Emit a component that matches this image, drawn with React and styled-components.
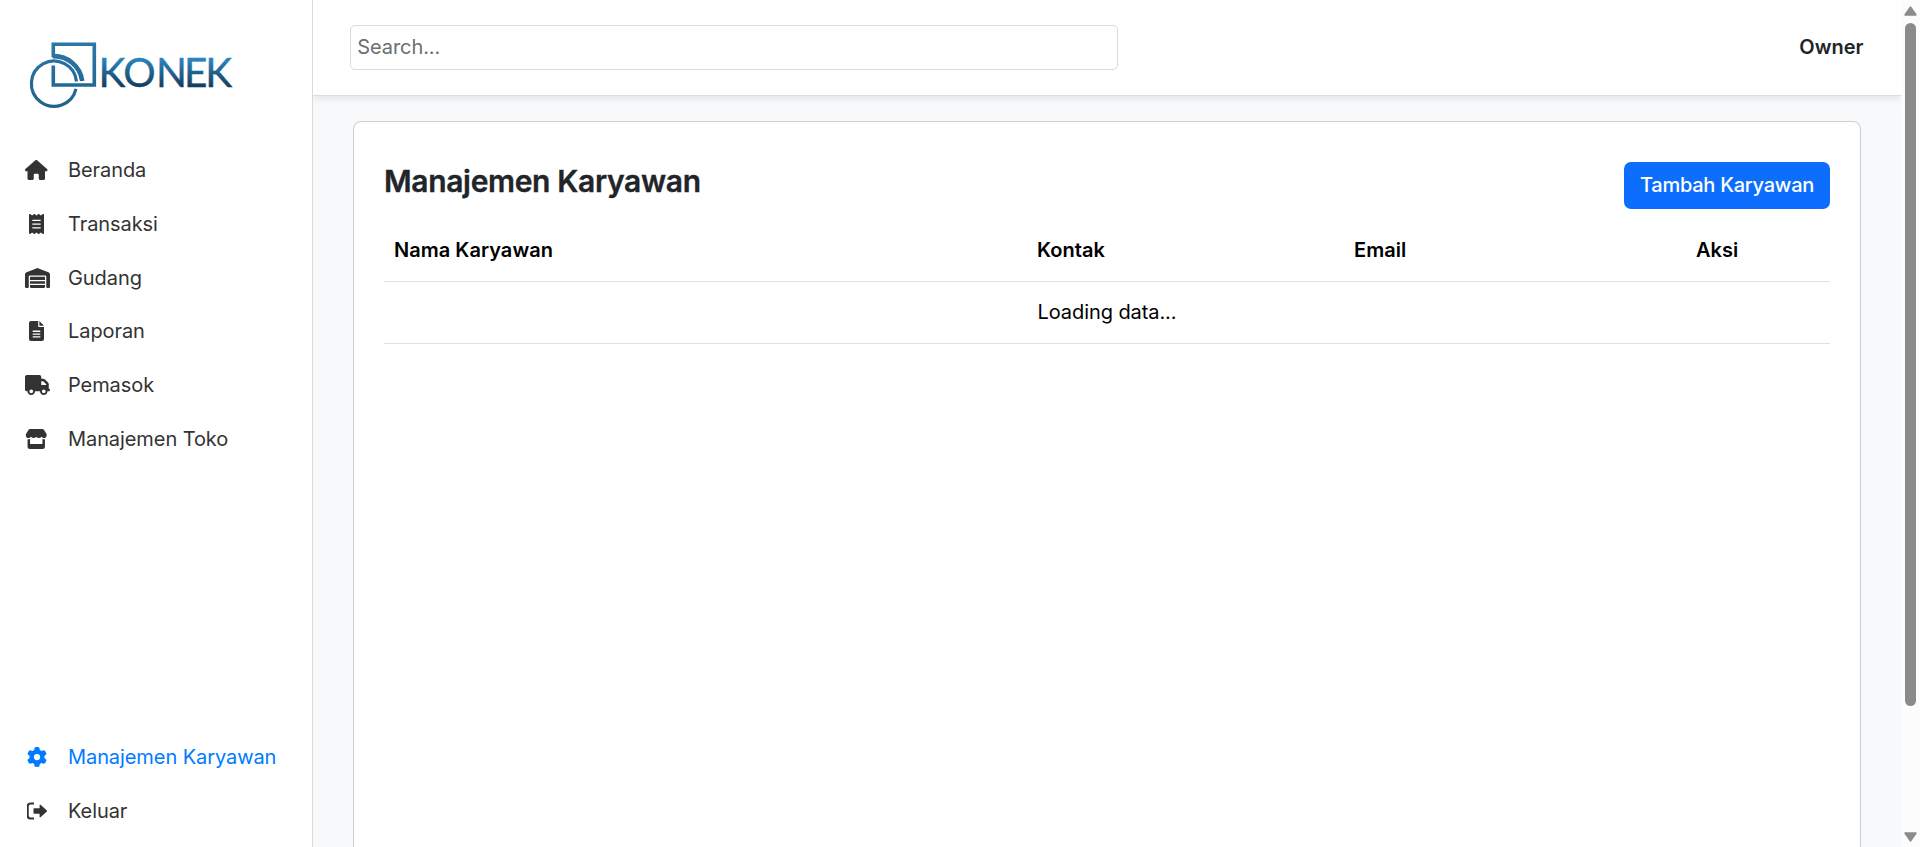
import React from "react";
import styled, { createGlobalStyle } from "styled-components";
import {
  FaHouse,
  FaReceipt,
  FaWarehouse,
  FaTruck,
  FaGear,
} from "react-icons/fa6";

const GlobalStyle = createGlobalStyle`
  *, *::before, *::after { box-sizing: border-box; }
  html, body { margin: 0; height: 100%; overflow: hidden; }
  body {
    font-family: Inter, "Liberation Sans", sans-serif;
    font-size: 20px;
    line-height: 30px;
    color: #212529;
    background: #f8f9fb;
  }
`;

const Page = styled.div`
  display: flex;
  height: 847px;
  overflow: hidden;
`;

const Sidebar = styled.aside`
  width: 313px;
  flex: none;
  display: flex;
  flex-direction: column;
  justify-content: space-between;
  background: #fff;
  border-right: 1px solid #d9dadc;
  padding-bottom: 9px;
`;

const Logo = styled.svg`
  display: block;
  width: 260px;
  height: 143px;
`;

const NavList = styled.nav`
  display: flex;
  flex-direction: column;
  padding-top: 0.3px;
`;

const NavItem = styled.a`
  display: flex;
  align-items: center;
  height: 53.75px;
  padding-left: 25px;
  color: ${(p) => (p.$active ? "#007bff" : "#333")};
  letter-spacing: -0.08px;
  text-decoration: none;
  white-space: nowrap;
`;

const NavIcon = styled.span`
  display: flex;
  justify-content: ${(p) => (p.$w > 23 ? "flex-start" : "center")};
  width: 23px;
  margin-right: 20px;
  svg { display: block; flex: none; height: 20px; width: ${(p) => p.$w}px; }
`;

const Main = styled.main`
  flex: 1;
  display: flex;
  flex-direction: column;
  min-width: 0;
`;

const Header = styled.header`
  flex: none;
  display: flex;
  justify-content: space-between;
  align-items: center;
  height: 96px;
  padding: 0 37px 1px;
  background: #fff;
  border-bottom: 1px solid #dcdddf;
  box-shadow: 0 2px 8px rgba(0, 0, 0, 0.1);
  clip-path: inset(0 0 -14px 0);
`;

const SearchInput = styled.input`
  width: 768px;
  height: 45px;
  padding: 0 6.3px;
  border: 1px solid #d9dadb;
  border-radius: 5px;
  font: inherit;
  letter-spacing: -0.08px;
  outline: none;
  &::placeholder { color: #6c6e70; opacity: 1; }
`;

const Owner = styled.span`
  font-weight: 600;
  padding-right: 0.5px;
`;

const Card = styled.section`
  flex: 1;
  margin: 25px 40px 0;
  padding: 40px 30px 0;
  background: #fff;
  border: 1px solid #cfd0d2;
  border-bottom: 0;
  border-radius: 8px 8px 0 0;
`;

const CardHead = styled.div`
  display: flex;
  justify-content: space-between;
  align-items: flex-start;
  height: 57px;
`;

const Title = styled.h1`
  margin: 0;
  font-size: 30px;
  line-height: 38px;
  font-weight: 600;
  letter-spacing: -0.34px;
  -webkit-text-stroke: 0.35px currentColor;
`;

const AddButton = styled.button`
  width: 206px;
  height: 47px;
  padding: 0 0 2px;
  border: 0;
  border-radius: 7px;
  background: #0d6efd;
  color: #fff;
  font: inherit;
  font-weight: 500;
  letter-spacing: -0.25px;
`;

const Table = styled.table`
  width: 100%;
  table-layout: fixed;
  border-collapse: collapse;
  color: #000;
  th, td {
    height: 62px;
    padding: 0 10px;
    border-bottom: 1px solid #dee2e6;
  }
  th { font-weight: 600; text-align: left; letter-spacing: 0.03px; }
  td { text-align: center; letter-spacing: -0.08px; }
`;

const Column = styled.col`
  width: ${(p) => p.$w}px;
`;

const ScrollTrack = styled.div`
  flex: none;
  width: 19px;
  padding: 6px 3px 5px;
  background: #fcfcfc;
  display: flex;
  flex-direction: column;
  align-items: center;
`;

const ScrollThumb = styled.div`
  width: 11px;
  height: 683px;
  margin: 7px 0 126px;
  border-radius: 6px;
  background: #8b8b8b;
`;

const Arrow = styled.svg`
  display: block;
  width: 13px;
  height: 10px;
  transform: ${(p) => (p.$down ? "rotate(180deg)" : "none")};
`;

const ShopIcon = () => (
  <svg viewBox="0 0 22 20" fill="currentColor">
    <path d="M5 0h12c.8 0 1.400.3 1.800.9L21 4.400C22.200 6.500 20.900 9 18.800 9c-1 0-1.900-.4-2.600-1.200C15.600 8.600 14.700 9 13.600 9S11.600 8.600 11 7.800C10.400 8.600 9.500 9 8.400 9S6.400 8.600 5.800 7.800C5.100 8.600 4.200 9 3.200 9 1.100 9-.2 6.500 1 4.400L3.200.9C3.600.3 4.200 0 5 0z" />
    <path d="M2.300 10.200c.9.200 1.800.1 2.500-.2V15h12.400v-5c.8.300 1.700.4 2.500.2V17.500A2.500 2.500 0 0 1 17.200 20H4.800A2.500 2.500 0 0 1 2.300 17.500z" />
  </svg>
);

const FileIcon = () => (
  <svg viewBox="0 0 15 20" fill="currentColor">
    <path
      fillRule="evenodd"
      d="M2 0H9.200V5.200Q9.200 6 10 6H15V18Q15 20 13 20H2Q0 20 0 18V2Q0 0 2 0zM3.700 9.600V10.900H11.300V9.600zM3.700 12.400V13.700H11.300V12.400zM3.700 15.200V16.500H11.300V15.200z"
    />
    <path d="M10.400 0L15 4.700H10.400z" />
  </svg>
);

const ExitIcon = () => (
  <svg viewBox="0 0 20 20">
    <path
      d="M7 2.500H3.500Q.7 2.500 .7 5.300V14.700Q.7 17.500 3.500 17.500H7"
      fill="none"
      stroke="currentColor"
      strokeWidth="2.100"
    />
    <path
      d="M7.200 7.200H12.600V4.300Q12.700 3 13.800 3.900L19.900 9.400Q20.400 10 19.900 10.600L13.800 16.100Q12.700 17 12.600 15.700V12.800H7.200Q6.500 12.800 6.500 12.100V7.900Q6.500 7.200 7.200 7.200z"
      fill="currentColor"
    />
  </svg>
);

const mainLinks = [
  { label: "Beranda", Icon: FaHouse, w: 22.5 },
  { label: "Transaksi", Icon: FaReceipt, w: 15 },
  { label: "Gudang", Icon: FaWarehouse, w: 25 },
  { label: "Laporan", Icon: FileIcon, w: 15 },
  { label: "Pemasok", Icon: FaTruck, w: 25 },
  { label: "Manajemen Toko", Icon: ShopIcon, w: 22.5 },
];

const footLinks = [
  { label: "Manajemen Karyawan", Icon: FaGear, w: 20, active: true },
  { label: "Keluar", Icon: ExitIcon, w: 20 },
];

const Links = ({ items }) => (
  <NavList>
    {items.map(({ label, Icon, w, active }) => (
      <NavItem key={label} $active={active}>
        <NavIcon $w={w}>
          <Icon />
        </NavIcon>
        {label}
      </NavItem>
    ))}
  </NavList>
);

const Brand = () => (
  <Logo viewBox="0 0 260 143" role="img" aria-label="Konek">
    <defs>
      <linearGradient id="word" gradientUnits="userSpaceOnUse" x1="0" y1="57" x2="0" y2="88">
        <stop offset="0" stopColor="#2b8ac4" />
        <stop offset="1" stopColor="#123a58" />
      </linearGradient>
      <linearGradient id="mark" gradientUnits="userSpaceOnUse" x1="0" y1="42" x2="0" y2="108">
        <stop offset="0" stopColor="#2a78a9" />
        <stop offset="1" stopColor="#20618c" />
      </linearGradient>
    </defs>
    <g fill="none" stroke="url(#mark)">
      <path strokeWidth="3.600" d="M53.300 57V44.200H94.300V85H53.300V65.500" />
      <path strokeWidth="4.600" d="M52.500 56.200A28.500 28.500 0 0 1 82.200 81" />
      <path strokeWidth="3.200" d="M76.500 81.500A22.600 22.600 0 1 0 76 88.800" />
    </g>
    <text
      x="98.600 123.200 156 184 205.200"
      y="87"
      fill="url(#word)"
      stroke="url(#word)"
      strokeWidth="0.400"
      fontFamily="Lato, sans-serif"
      fontSize="40.500"
    >
      KONEK
    </text>
  </Logo>
);

const ScrollArrow = ({ down }) => (
  <Arrow $down={down} viewBox="0 0 13 10">
    <path
      d="M6.500 1.200L11.800 8.800H1.200z"
      fill="#8b8b8b"
      stroke="#8b8b8b"
      strokeWidth="1.800"
      strokeLinejoin="round"
    />
  </Arrow>
);

export default function App() {
  return (
    <>
      <GlobalStyle />
      <Page>
        <Sidebar>
          <div>
            <Brand />
            <Links items={mainLinks} />
          </div>
          <Links items={footLinks} />
        </Sidebar>
        <Main>
          <Header>
            <SearchInput placeholder="Search..." />
            <Owner>Owner</Owner>
          </Header>
          <Card>
            <CardHead>
              <Title>Manajemen Karyawan</Title>
              <AddButton>Tambah Karyawan</AddButton>
            </CardHead>
            <Table>
              <colgroup>
                <Column $w={643} />
                <Column $w={317} />
                <Column $w={342} />
                <Column $w={144} />
              </colgroup>
              <thead>
                <tr>
                  <th>Nama Karyawan</th>
                  <th>Kontak</th>
                  <th>Email</th>
                  <th>Aksi</th>
                </tr>
              </thead>
              <tbody>
                <tr>
                  <td colSpan={4}>Loading data...</td>
                </tr>
              </tbody>
            </Table>
          </Card>
        </Main>
        <ScrollTrack>
          <ScrollArrow />
          <ScrollThumb />
          <ScrollArrow down />
        </ScrollTrack>
      </Page>
    </>
  );
}
